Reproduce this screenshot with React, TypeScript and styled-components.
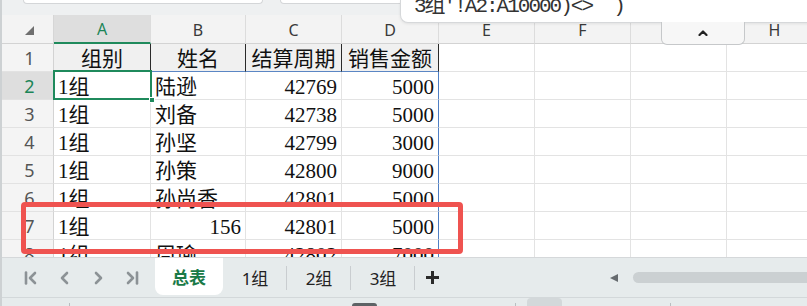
import { Fragment } from 'react'
import styled, { createGlobalStyle, css } from 'styled-components'

const GlobalStyle = createGlobalStyle`
    html, body {
        margin: 0;
        padding: 0;
    }
    body {
        width: 807px;
        height: 306px;
        overflow: hidden;
        background: #e6ebec;
        font-family: "Noto Sans", "Noto Sans CJK SC", sans-serif;
    }
`

const COLS = ['A', 'B', 'C', 'D', 'E', 'F', 'G', 'H']

const ROWS = [
    ['组别', '姓名', '结算周期', '销售金额'],
    ['1组', '陆逊', '42769', '5000'],
    ['1组', '刘备', '42738', '5000'],
    ['1组', '孙坚', '42799', '3000'],
    ['1组', '孙策', '42800', '9000'],
    ['1组', '孙尚香', '42801', '5000'],
    ['1组', '156', '42801', '5000'],
    ['1组', '周瑜', '42802', '7000'],
]

const SHEETS = ['1组', '2组', '3组']

const Window = styled.div`
    position: relative;
    width: 807px;
    height: 306px;
    box-sizing: border-box;
    border-left: 2px solid #cdd1d3;
    display: flex;
    flex-direction: column;
    overflow: hidden;
`

const TopBar = styled.div`
    flex: 0 0 15px;
    display: flex;
    align-items: flex-start;
    background: #eef0f1;
`

const InputStub = styled.div<{ $left: number; $width: number }>`
    margin-left: ${(p) => p.$left}px;
    width: ${(p) => p.$width}px;
    height: 4px;
    box-sizing: border-box;
    background: #fff;
    border: 1px solid #d4d6d8;
    border-top: none;
    border-radius: 0 0 6px 6px;
`

const FormulaPopup = styled.div`
    position: absolute;
    top: 0;
    left: 398px;
    right: -12px;
    height: 23px;
    box-sizing: border-box;
    background: #fff;
    border-left: 1px solid #d6d8da;
    border-bottom: 1px solid #d6d8da;
    border-bottom-left-radius: 8px;
    box-shadow: 0 1px 3px rgba(0, 0, 0, 0.08);
    z-index: 5;
    overflow: hidden;
`

const FormulaText = styled.div`
    margin: -4px 0 0 13px;
    font: 21px/21px "Liberation Mono", "Noto Sans CJK SC", monospace;
    letter-spacing: -2px;
    color: #333;
    white-space: pre;
`

const CollapseTab = styled.div`
    position: absolute;
    top: 22px;
    left: 659px;
    width: 84px;
    height: 23px;
    box-sizing: border-box;
    background: #f7f7f7;
    border: 1px solid #c6c8ca;
    border-top: none;
    border-radius: 0 0 6px 6px;
    display: flex;
    align-items: center;
    justify-content: center;
    z-index: 6;
`

const SheetArea = styled.div`
    position: relative;
    flex: 0 0 243px;
    overflow: hidden;
    background: #fff;
    border-bottom: 1px solid #d5d8da;
    box-sizing: border-box;
`

const Grid = styled.div`
    display: grid;
    grid-template-columns: 52px 97px 95px 96px 97px 96px 96px 96px 96px;
    grid-template-rows: 29px repeat(8, 28px);
`

const Corner = styled.div`
    box-sizing: border-box;
    background: #f3f3f3;
    border-right: 1px solid #d6d6d6;
    border-bottom: 1px solid #d3d3d3;
    display: flex;
    align-items: center;
    justify-content: center;
    padding: 2px 0 0 4px;
`

const ColHead = styled.div<{ $active?: boolean }>`
    box-sizing: border-box;
    display: flex;
    align-items: center;
    justify-content: center;
    padding-top: 1px;
    background: ${(p) => (p.$active ? '#dedede' : '#f3f3f3')};
    color: ${(p) => (p.$active ? '#1c8558' : '#3a3a3a')};
    border-right: 1px solid #dcdcdc;
    border-bottom: ${(p) =>
        p.$active ? '2px solid #1f8a5c' : '1px solid #d3d3d3'};
    font: 16px "Noto Sans", sans-serif;
`

const RowHead = styled.div<{ $active?: boolean }>`
    box-sizing: border-box;
    display: flex;
    align-items: center;
    justify-content: center;
    padding-left: 4px;
    background: ${(p) => (p.$active ? '#dedede' : '#f4f4f4')};
    color: ${(p) => (p.$active ? '#1c8558' : '#555')};
    border-right: 1px solid #d3d3d3;
    border-bottom: 1px solid #e2e2e2;
    font: 18px "Noto Sans", sans-serif;
`

const Cell = styled.div<{
    $align: 'left' | 'right' | 'center'
    $title?: boolean
    $edge?: boolean
    $selected?: boolean
}>`
    position: relative;
    box-sizing: border-box;
    padding: 0 4px;
    background: ${(p) => (p.$title ? '#f0f0f0' : '#fff')};
    border-right: 1px solid
        ${(p) => (p.$title ? '#2a2a2a' : p.$edge ? '#4f7fc4' : '#e3e3e3')};
    border-bottom: 1px solid ${(p) => (p.$title ? '#5b86c4' : '#e3e3e3')};
    text-align: ${(p) => p.$align};
    font: 21px/31px "Liberation Serif", "Noto Sans CJK SC", serif;
    color: #111;
    white-space: nowrap;
    overflow: hidden;
    ${(p) =>
        p.$selected &&
        css`
            overflow: visible;
            z-index: 2;
            &::after {
                content: '';
                position: absolute;
                top: -2px;
                left: -1px;
                right: -2px;
                bottom: -1px;
                border: 2px solid #1f8a5c;
                pointer-events: none;
            }
        `}
`

const FillHandle = styled.span`
    position: absolute;
    right: -5px;
    bottom: -4px;
    width: 6px;
    height: 6px;
    box-sizing: border-box;
    background: #1f8a5c;
    border: 1px solid #fff;
    z-index: 3;
`

const Highlight = styled.div`
    position: absolute;
    left: 19px;
    top: 187px;
    width: 442px;
    height: 52px;
    box-sizing: border-box;
    border: 5px solid #ef5350;
    border-radius: 4px;
    z-index: 4;
    pointer-events: none;
`

const TabBar = styled.div`
    flex: 0 0 39px;
    display: flex;
    align-items: stretch;
    background: #e6ebec;
`

const NavGroup = styled.div`
    display: flex;
    align-items: center;
    padding-left: 13px;
`

const NavButton = styled.div`
    width: 33px;
    height: 100%;
    display: flex;
    align-items: center;
    justify-content: center;
    color: #8c9296;
`

const Tabs = styled.div`
    display: flex;
    align-items: stretch;
    margin-left: 8px;
`

const ActiveTab = styled.div`
    width: 68px;
    height: 37px;
    background: #fff;
    border-radius: 0 0 8px 8px;
    display: flex;
    align-items: center;
    justify-content: center;
    font: bold 17px "Noto Sans CJK SC", sans-serif;
    color: #1a7a47;
`

const SheetTab = styled.div`
    position: relative;
    width: 64px;
    display: flex;
    align-items: center;
    justify-content: center;
    font: 17px "Noto Sans", "Noto Sans CJK SC", sans-serif;
    color: #222;
    &::after {
        content: '';
        position: absolute;
        right: 0;
        top: 8px;
        height: 24px;
        width: 1px;
        background: #c9cdd0;
    }
`

const AddTab = styled.div`
    width: 34px;
    display: flex;
    align-items: center;
    justify-content: center;
`

const ScrollArea = styled.div`
    margin-left: auto;
    width: 217px;
    display: flex;
    align-items: center;
    overflow: hidden;
`

const Grip = styled.div`
    margin-left: 3px;
    width: 3px;
    height: 12px;
    border-radius: 1px;
    background: #9ea4a8;
`

const ArrowLeft = styled.div`
    margin-left: 17px;
    width: 0;
    height: 0;
    border-top: 4px solid transparent;
    border-bottom: 4px solid transparent;
    border-right: 8px solid #666b6f;
`

const Track = styled.div`
    margin-left: 15px;
    flex: 0 0 190px;
    height: 11px;
    border-radius: 6px;
    background: #cbd0d2;
`

const StatusStrip = styled.div`
    flex: 1;
    display: flex;
    align-items: flex-end;
    background: #e6ebec;
    border-top: 1px solid #d3d8da;
`

const StripDivider = styled.div<{ $left: number }>`
    margin-left: ${(p) => p.$left}px;
    width: 1px;
    height: 3px;
    background: #b9bec1;
`

const StripPill = styled.div<{ $left: number; $width: number; $dark?: boolean }>`
    margin-left: ${(p) => p.$left}px;
    width: ${(p) => p.$width}px;
    height: ${(p) => (p.$dark ? 3 : 8)}px;
    border-radius: 4px 4px 0 0;
    background: ${(p) => (p.$dark ? '#5d6265' : '#d3d8da')};
`

const isNumber = (v: string) => /^\d+$/.test(v)

function Chevron({ dir, bar }: { dir: 'left' | 'right'; bar?: boolean }) {
    const left = dir === 'left'
    return (
        <svg width="16" height="14" viewBox="0 0 16 14">
            {bar && (
                <line
                    x1={left ? 2 : 14}
                    y1="1.5"
                    x2={left ? 2 : 14}
                    y2="12.5"
                    stroke="currentColor"
                    strokeWidth="2.6"
                    strokeLinecap="round"
                />
            )}
            <polyline
                points={
                    bar
                        ? left
                            ? '11,2 6,7 11,12'
                            : '5,2 10,7 5,12'
                        : left
                          ? '10,2 5,7 10,12'
                          : '6,2 11,7 6,12'
                }
                fill="none"
                stroke="currentColor"
                strokeWidth="2.6"
                strokeLinecap="round"
                strokeLinejoin="round"
            />
        </svg>
    )
}

function App() {
    return (
        <>
            <GlobalStyle />
            <Window>
                <TopBar>
                    <InputStub $left={21} $width={240} />
                    <InputStub $left={17} $width={140} />
                </TopBar>
                <FormulaPopup>
                    <FormulaText>{"3组'!A2:A10000)<>  )"}</FormulaText>
                </FormulaPopup>
                <CollapseTab>
                    <svg width="10" height="6" viewBox="0 0 10 6">
                        <polyline
                            points="1.5,5 5,1.5 8.5,5"
                            fill="none"
                            stroke="#222"
                            strokeWidth="2.2"
                            strokeLinecap="round"
                            strokeLinejoin="round"
                        />
                    </svg>
                </CollapseTab>
                <SheetArea>
                    <Grid>
                        <Corner>
                            <svg width="9" height="9" viewBox="0 0 9 9">
                                <polygon points="9,0 9,9 0,9" fill="#6f6f6f" />
                            </svg>
                        </Corner>
                        {COLS.map((c, i) => (
                            <ColHead key={c} $active={i === 0}>
                                {c}
                            </ColHead>
                        ))}
                        {ROWS.map((row, r) => (
                            <Fragment key={r}>
                                <RowHead $active={r === 1}>{r + 1}</RowHead>
                                {COLS.map((c, ci) => {
                                    const value = ci < 4 ? row[ci] : ''
                                    const title = r === 0 && ci < 4
                                    const selected = r === 1 && ci === 0
                                    return (
                                        <Cell
                                            key={c}
                                            $align={
                                                title
                                                    ? 'center'
                                                    : isNumber(value)
                                                      ? 'right'
                                                      : 'left'
                                            }
                                            $title={title}
                                            $edge={r > 0 && ci === 3}
                                            $selected={selected}
                                        >
                                            {value}
                                            {selected && <FillHandle />}
                                        </Cell>
                                    )
                                })}
                            </Fragment>
                        ))}
                    </Grid>
                    <Highlight />
                </SheetArea>
                <TabBar>
                    <NavGroup>
                        <NavButton>
                            <Chevron dir="left" bar />
                        </NavButton>
                        <NavButton>
                            <Chevron dir="left" />
                        </NavButton>
                        <NavButton>
                            <Chevron dir="right" />
                        </NavButton>
                        <NavButton>
                            <Chevron dir="right" bar />
                        </NavButton>
                    </NavGroup>
                    <Tabs>
                        <ActiveTab>总表</ActiveTab>
                        {SHEETS.map((s) => (
                            <SheetTab key={s}>{s}</SheetTab>
                        ))}
                        <AddTab>
                            <svg width="15" height="15" viewBox="0 0 15 15">
                                <path
                                    d="M7.5 1v13M1 7.5h13"
                                    stroke="#2a2a2a"
                                    strokeWidth="3"
                                />
                            </svg>
                        </AddTab>
                    </Tabs>
                    <ScrollArea>
                        <Grip />
                        <ArrowLeft />
                        <Track />
                    </ScrollArea>
                </TabBar>
                <StatusStrip>
                    <StripDivider $left={67} />
                    <StripPill $left={282} $width={25} $dark />
                    <StripDivider $left={138} />
                    <StripPill $left={11} $width={35} />
                    <StripDivider $left={108} />
                </StatusStrip>
            </Window>
        </>
    )
}

export default App
